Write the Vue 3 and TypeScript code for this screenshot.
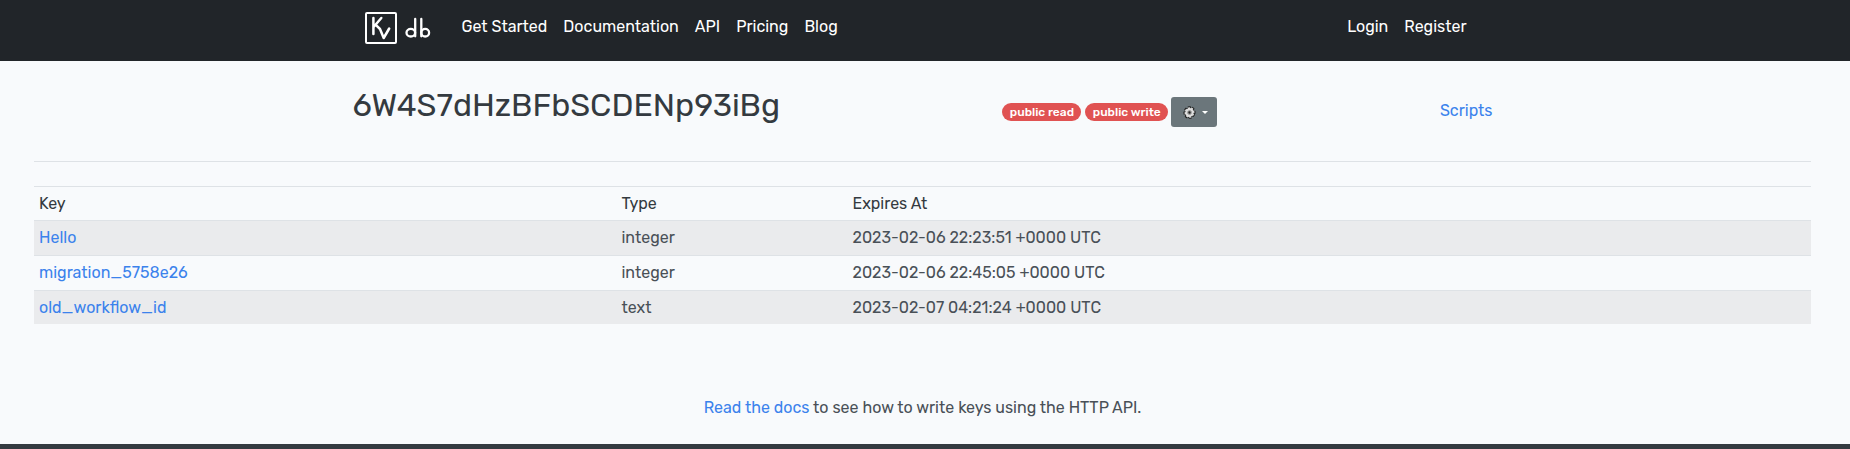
<script setup lang="ts">
interface Entry {
  key: string
  type: string
  expires: string
}

const navLinks: string[] = ['Get Started', 'Documentation', 'API', 'Pricing', 'Blog']
const accountLinks: string[] = ['Login', 'Register']
const bucketId = '6W4S7dHzBFbSCDENp93iBg'
const badges: string[] = ['public read', 'public write']
const entries: Entry[] = [
  { key: 'Hello', type: 'integer', expires: '2023-02-06 22:23:51 +0000 UTC' },
  { key: 'migration_5758e26', type: 'integer', expires: '2023-02-06 22:45:05 +0000 UTC' },
  { key: 'old_workflow_id', type: 'text', expires: '2023-02-07 04:21:24 +0000 UTC' },
]
</script>

<template>
  <div class="page">
    <header class="navbar">
      <nav class="navbar-inner">
        <a class="brand" aria-label="kvdb">
          <svg width="68" height="34" viewBox="0 0 68 34" fill="none" stroke="#fff" stroke-linecap="round" stroke-linejoin="round">
            <rect x="2" y="2" width="30" height="30" rx="1" stroke-width="2" />
            <path d="M9.4 7V23M17.3 7L9.6 16M12 14.2L16 18L19.7 27L25.2 17.5" stroke-width="2.5" />
            <path d="M51.2 8V25.3M57.3 8V25.3" stroke-width="2.3" />
            <ellipse cx="46.8" cy="21.7" rx="4.3" ry="3.8" stroke-width="2.3" />
            <ellipse cx="61.2" cy="21.7" rx="3.9" ry="3.8" stroke-width="2.3" />
          </svg>
        </a>
        <a v-for="link in navLinks" :key="link" class="nav-link">{{ link }}</a>
        <div class="account">
          <a v-for="link in accountLinks" :key="link" class="nav-link">{{ link }}</a>
        </div>
      </nav>
    </header>

    <main class="content">
      <section class="bucket-head">
        <h1 class="bucket-title">{{ bucketId }}</h1>
        <div class="bucket-tools">
          <span v-for="badge in badges" :key="badge" class="badge">{{ badge }}</span>
          <button class="settings" type="button" aria-label="Settings">
            <svg width="13" height="13" viewBox="0 0 13 13">
              <g transform="rotate(20 6.5 6.5)">
                <ellipse cx="6.5" cy="6.5" rx="5" ry="5.4" fill="#222" stroke="#222" stroke-width="2" stroke-dasharray="2.6 1.5" />
                <ellipse cx="6.5" cy="6.5" rx="4.2" ry="4.6" fill="#dedede" stroke="#dedede" stroke-width="1.4" stroke-dasharray="2 1.4" />
                <circle cx="6.5" cy="6.5" r="2.3" fill="#8b8b8b" />
                <circle cx="6.5" cy="6.5" r="1.1" fill="#222" />
              </g>
            </svg>
            <span class="caret"></span>
          </button>
        </div>
        <a class="link scripts">Scripts</a>
      </section>

      <hr class="rule" />

      <table class="entries">
        <thead>
          <tr>
            <th class="col-key">Key</th>
            <th class="col-type">Type</th>
            <th>Expires At</th>
          </tr>
        </thead>
        <tbody>
          <tr v-for="entry in entries" :key="entry.key">
            <td><a class="link">{{ entry.key }}</a></td>
            <td>{{ entry.type }}</td>
            <td>{{ entry.expires }}</td>
          </tr>
        </tbody>
      </table>

      <p class="hint"><a class="link">Read the docs</a> to see how to write keys using the HTTP API.</p>
    </main>
    <footer class="footer"></footer>
  </div>
</template>

<style>
body {
  margin: 0;
  background: #f8fafc;
}
</style>

<style scoped>
.page {
  display: flex;
  flex-direction: column;
  height: 449px;
  overflow: hidden;
  background: #f8fafc;
  color: #495057;
  font: 400 16px/24px Rubik, Roboto, "Liberation Sans", sans-serif;
}
.page * {
  box-sizing: border-box;
}
.navbar {
  flex: none;
  height: 61px;
  background: #212529;
}
.navbar-inner {
  display: flex;
  width: 1110.5px;
  margin-left: 364px;
  padding-top: 11px;
}
.brand {
  width: 89.5px;
  height: 36px;
}
.brand svg {
  display: block;
}
.nav-link {
  padding: 4px 8px;
  color: #fff;
}
.account {
  display: flex;
  margin-left: auto;
}
.content {
  flex: none;
  height: 383px;
  padding: 0 39px 0 34px;
}
.bucket-head {
  display: flex;
  width: 1140px;
  height: 100px;
  margin: 0 auto;
  padding-top: 25px;
}
.bucket-title {
  width: 650px;
  margin: 0;
  color: #343a40;
  font-size: 32px;
  font-weight: 400;
  line-height: 38px;
}
.bucket-tools {
  display: flex;
  width: 437.5px;
  gap: 4px;
  padding-top: 11px;
}
.badge {
  height: 18px;
  margin-top: 6px;
  padding: 0 7.4px;
  border-radius: 9px;
  background: #e05252;
  color: #fff;
  font-size: 12px;
  font-weight: 500;
  line-height: 18px;
}
.settings {
  display: flex;
  align-items: center;
  gap: 6px;
  width: 46px;
  height: 30px;
  margin-left: -1.2px;
  padding: 0 0 0 12px;
  border: 0;
  border-radius: 3px;
  background: #6b767b;
}
.caret {
  border-top: 3px solid #fff;
  border-right: 3px solid transparent;
  border-left: 3px solid transparent;
}
.link {
  color: #3b82ec;
}
.scripts {
  padding-top: 13px;
}
.rule {
  margin: 0 0 24px;
  border: 0;
  border-top: 1px solid #dee2e6;
}
.entries {
  width: 100%;
  border-collapse: separate;
  border-spacing: 0;
  table-layout: fixed;
}
.entries th,
.entries td {
  height: 35px;
  padding: 4px 5px;
  border-top: 1px solid #dee2e6;
  font-weight: 400;
  text-align: left;
}
.entries th {
  height: 34px;
  color: #343a40;
}
.entries tbody tr:nth-child(odd) {
  background: #eaebed;
}
.entries tbody tr:last-child td {
  height: 34px;
}
.col-key {
  width: 582.5px;
}
.col-type {
  width: 231px;
}
.hint {
  margin: 72px 0 0;
  text-align: center;
}
.footer {
  flex: none;
  height: 5px;
  background: #343a40;
}
</style>
